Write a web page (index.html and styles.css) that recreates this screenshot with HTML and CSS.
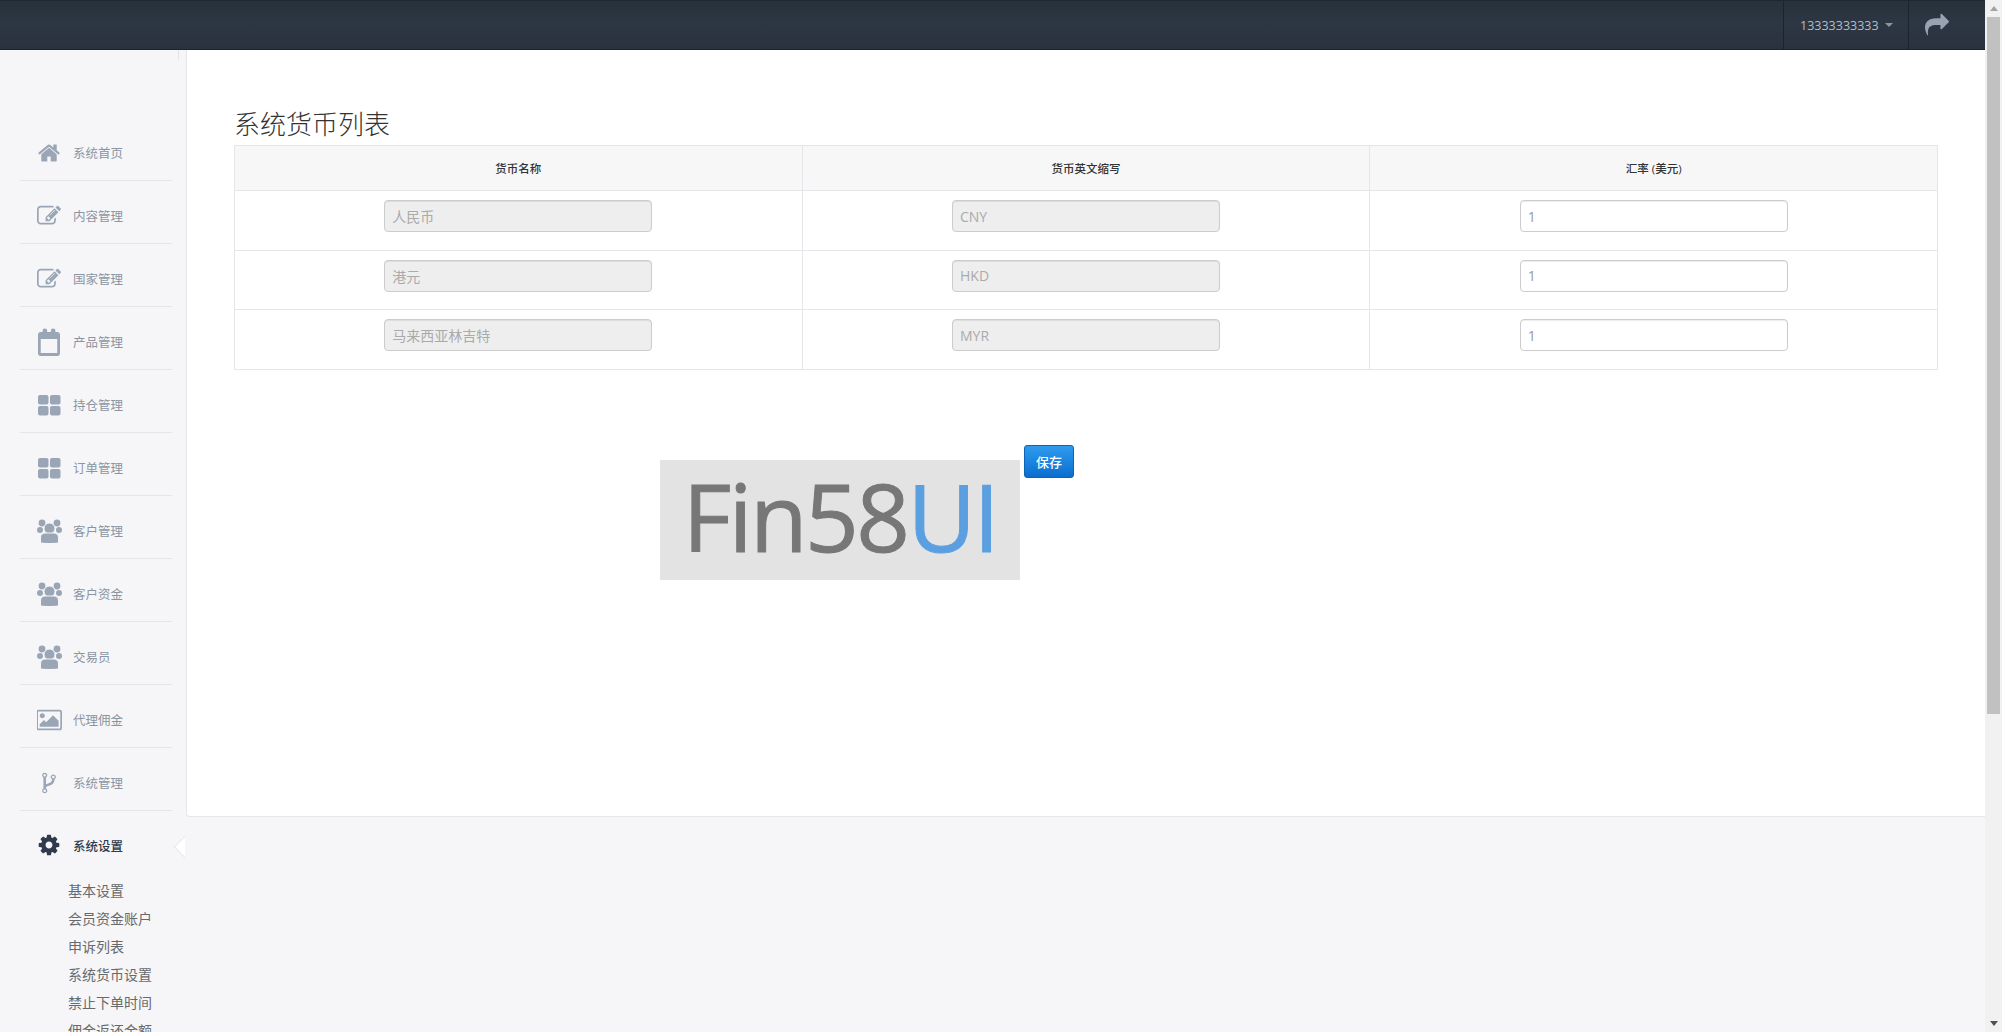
FILE: index.html
```html
<!DOCTYPE html>
<html lang="en">
  <head>
    <meta charset="UTF-8" />
    <title>系统货币列表</title>
    <link rel="stylesheet" href="styles.css">
  </head>
  <body>
    <svg class="sprite" xmlns="http://www.w3.org/2000/svg">
      <symbol id="i-home" viewBox="0 0 1792 1792"><path d="M1472 992v480q0 26-19 45t-45 19h-384v-384h-256v384h-384q-26 0-45-19t-19-45v-480q0-1 .5-3t.5-3l575-474 575 474q1 2 1 6zm223-69l-62 74q-8 9-21 11h-3q-13 0-21-7l-692-577-692 577q-12 8-24 7-13-2-21-11l-62-74q-8-10-7-23.5t11-20.5l719-599q32-26 76-26t76 26l244 204v-195q0-14 9-23t23-9h192q14 0 23 9t9 23v408l219 182q10 8 11 21.5t-7 23.5z"/></symbol>
      <symbol id="i-edit" viewBox="0 0 1792 1792"><path d="M888 1184l116-116-152-152-116 116v56h96v96h56zm440-720q-16-16-33 1l-350 350q-17 17-1 33t33-1l350-350q17-17 1-33zm80 594v190q0 119-84.5 203.5t-203.5 84.5h-832q-119 0-203.5-84.5t-84.5-203.5v-832q0-119 84.5-203.5t203.5-84.5h832q63 0 117 25 15 7 18 23 3 17-9 29l-49 49q-14 14-32 8-23-6-45-6h-832q-66 0-113 47t-47 113v832q0 66 47 113t113 47h832q66 0 113-47t47-113v-126q0-13 9-22l64-64q15-15 35-7t20 29zm-96-738l288 288-672 672h-288v-288zm444 132l-92 92-288-288 92-92q28-28 68-28t68 28l152 152q28 28 28 68t-28 68z"/></symbol>
      <symbol id="i-calendar" viewBox="0 0 24 28" preserveAspectRatio="none"><path fill-rule="evenodd" d="M3 4h2v-1.500q0-2 2.500-2t2.500 2v1.500h4v-1.500q0-2 2.500-2t2.500 2v1.500h2q3 0 3 3v18q0 3-3 3h-18q-3 0-3-3v-18q0-3 3-3zm0 7v14h18v-14z"/></symbol>
      <symbol id="i-grid" viewBox="0 0 24 24"><rect x="1" y="2" width="10.500" height="9.500" rx="2"/><rect x="13" y="2" width="10.500" height="9.500" rx="2"/><rect x="1" y="13" width="10.500" height="9.500" rx="2"/><rect x="13" y="13" width="10.500" height="9.500" rx="2"/></symbol>
      <symbol id="i-group" viewBox="0 0 26 24">
        <circle cx="5" cy="4" r="3.400"/><circle cx="20" cy="4" r="3.400"/>
        <circle cx="3" cy="11" r="3"/><circle cx="22" cy="11" r="3"/>
        <circle class="halo" cx="12.500" cy="9.500" r="5.500"/>
        <path class="halo" d="M3.500 24v-5q0-5 5-5h8q5 0 5 5v5q-4 .500-9 .500t-9-.500z"/>
      </symbol>
      <symbol id="i-picture" viewBox="0 0 1920 1792"><path d="M576 576q0 80-56 136t-136 56-136-56-56-136 56-136 136-56 136 56 56 136zm1024 384v448h-1408v-192l320-320 160 160 512-512zm96-704h-1600q-13 0-22.500 9.500t-9.500 22.500v1216q0 13 9.500 22.500t22.500 9.500h1600q13 0 22.500-9.500t9.500-22.500v-1216q0-13-9.500-22.500t-22.500-9.500zm160 32v1216q0 66-47 113t-113 47h-1600q-66 0-113-47t-47-113v-1216q0-66 47-113t113-47h1600q66 0 113 47t47 113z"/></symbol>
      <symbol id="i-fork" viewBox="0 0 1792 1792"><path d="M672 1472q0-40-28-68t-68-28-68 28-28 68 28 68 68 28 68-28 28-68zm0-1152q0-40-28-68t-68-28-68 28-28 68 28 68 68 28 68-28 28-68zm640 128q0-40-28-68t-68-28-68 28-28 68 28 68 68 28 68-28 28-68zm96 0q0 52-26 96.500t-70 69.500q-2 287-226 414-67 38-203 81-128 40-169.500 71t-41.500 100v26q44 25 70 69.500t26 96.500q0 80-56 136t-136 56-136-56-56-136q0-52 26-96.500t70-69.500v-820q-44-25-70-69.500t-26-96.500q0-80 56-136t136-56 136 56 56 136q0 52-26 96.500t-70 69.500v497q54-26 154-57 55-17 87.500-29.500t70.500-31 59-39.500 40.500-51 28-69.500 8.500-91.500q-44-25-70-69.500t-26-96.500q0-80 56-136t136-56 136 56 56 136z"/></symbol>
      <symbol id="i-cog" viewBox="0 0 1792 1792"><path d="M1152 896q0-106-75-181t-181-75-181 75-75 181 75 181 181 75 181-75 75-181zm512-109v222q0 12-8 23t-20 13l-185 28q-19 54-39 91 35 50 107 138 10 12 10 25t-9 23q-27 37-99 108t-94 71q-12 0-26-9l-138-108q-44 23-91 38-16 136-29 186-7 28-36 28h-222q-14 0-24.500-8.500t-11.500-21.500l-28-184q-49-16-90-37l-141 107q-10 9-25 9-14 0-25-11-126-114-165-168-7-10-7-23 0-12 8-23 15-21 51-66.500t54-70.500q-27-50-41-99l-183-27q-13-2-21-12.500t-8-23.500v-222q0-12 8-23t19-13l186-28q14-46 39-92-40-57-107-138-10-12-10-24 0-10 9-23 26-36 98.500-107.500t94.500-71.500q13 0 26 10l138 107q44-23 91-38 16-136 29-186 7-28 36-28h222q14 0 24.500 8.500t11.500 21.500l28 184q49 16 90 37l142-107q9-9 24-9 13 0 25 10 129 119 165 170 7 8 7 22 0 12-8 23-15 21-51 66.500t-54 70.500q26 50 41 98l183 28q13 2 21 12.500t8 23.500z"/></symbol>
      <symbol id="i-share" viewBox="0 0 1792 1792"><path d="M1792 640q0 26-19 45l-512 512q-19 19-45 19t-45-19-19-45v-256h-224q-98 0-175.500 6t-154 21.500-133 42.500-105.500 69.500-79 101-47.500 138.500-17.500 181.500q0 55 5 123 0 6 2.500 23.500t2.500 26.500q0 15-8.500 25t-23.500 10q-16 0-28-17-7-9-13-22t-13.500-30-10.500-24q-127-285-127-451 0-199 53-333 162-403 875-403h224v-256q0-26 19-45t45-19 45 19l512 512q19 19 19 45z"/></symbol>
    </svg>

    <div class="window">
      <div class="page">
        <!-- Top bar -->
        <header class="topbar">
          <a class="user-menu">13333333333<span class="caret"></span></a>
          <a class="logout"><svg class="logout-icon"><use href="#i-share"/></svg></a>
        </header>

        <div class="wrapper">
          <!-- Sidebar -->
          <nav class="sidebar">
            <a class="nav-item"><svg class="nav-icon"><use href="#i-home"/></svg>系统首页</a>
            <a class="nav-item"><svg class="nav-icon"><use href="#i-edit"/></svg>内容管理</a>
            <a class="nav-item"><svg class="nav-icon"><use href="#i-edit"/></svg>国家管理</a>
            <a class="nav-item"><svg class="nav-icon calendar"><use href="#i-calendar"/></svg>产品管理</a>
            <a class="nav-item"><svg class="nav-icon"><use href="#i-grid"/></svg>持仓管理</a>
            <a class="nav-item"><svg class="nav-icon"><use href="#i-grid"/></svg>订单管理</a>
            <a class="nav-item"><svg class="nav-icon wide"><use href="#i-group"/></svg>客户管理</a>
            <a class="nav-item"><svg class="nav-icon wide"><use href="#i-group"/></svg>客户资金</a>
            <a class="nav-item"><svg class="nav-icon wide"><use href="#i-group"/></svg>交易员</a>
            <a class="nav-item"><svg class="nav-icon wide"><use href="#i-picture"/></svg>代理佣金</a>
            <a class="nav-item"><svg class="nav-icon"><use href="#i-fork"/></svg>系统管理</a>
            <a class="nav-item active"><svg class="nav-icon"><use href="#i-cog"/></svg>系统设置<span class="arrow"></span></a>
            <div class="submenu">
              <a>基本设置</a>
              <a>会员资金账户</a>
              <a>申诉列表</a>
              <a>系统货币设置</a>
              <a>禁止下单时间</a>
              <a>佣金返还金额</a>
            </div>
          </nav>

          <!-- Content -->
          <main class="content">
            <h1 class="page-title">系统货币列表</h1>
            <table class="currency-table">
              <thead>
                <tr>
                  <th>货币名称</th>
                  <th>货币英文缩写</th>
                  <th>汇率 (美元)</th>
                </tr>
              </thead>
              <tbody>
                <tr>
                  <td><input class="field" type="text" value="人民币" disabled></td>
                  <td><input class="field" type="text" value="CNY" disabled></td>
                  <td><input class="field" type="text" value="1"></td>
                </tr>
                <tr>
                  <td><input class="field" type="text" value="港元" disabled></td>
                  <td><input class="field" type="text" value="HKD" disabled></td>
                  <td><input class="field" type="text" value="1"></td>
                </tr>
                <tr>
                  <td><input class="field" type="text" value="马来西亚林吉特" disabled></td>
                  <td><input class="field" type="text" value="MYR" disabled></td>
                  <td><input class="field" type="text" value="1"></td>
                </tr>
              </tbody>
            </table>
            <div class="actions">
              <div class="logo">Fin58<span class="logo-ui">UI</span></div>
              <button class="save-button">保存</button>
            </div>
          </main>
        </div>
      </div>

      <!-- Scrollbar -->
      <div class="scrollbar">
        <span class="scroll-up"></span>
        <div class="scroll-thumb"></div>
        <span class="scroll-down"></span>
      </div>
    </div>
  </body>
</html>
```

FILE: styles.css
```css
body {
  margin: 0;
  height: 1032px;
  overflow: hidden;
  font-family: "Open Sans", "Noto Sans CJK SC", sans-serif;
  font-size: 13px;
  color: #676a6c;
  background-color: #f6f6f8;
}

.sprite {
  display: none;
}

.window {
  display: flex;
  height: 1032px;
}

.page {
  flex: 1;
  min-width: 0;
  display: flex;
  flex-direction: column;
}

/* Top bar */
.topbar {
  height: 50px;
  box-sizing: border-box;
  display: flex;
  justify-content: flex-end;
  background: linear-gradient(#27313c, #2d3743 45%, #29323e);
  border-top: 1px solid #1f2832;
  border-bottom: 1px solid #1b232c;
}

.user-menu {
  width: 125px;
  box-sizing: border-box;
  display: flex;
  align-items: center;
  padding-left: 16px;
  color: #b4bcc6;
  font-size: 12.5px;
  border-left: 1px solid #1b232c;
}

.caret {
  margin-left: 6px;
  border-top: 4px solid #8b95a1;
  border-left: 4px solid transparent;
  border-right: 4px solid transparent;
}

.logout {
  width: 77px;
  box-sizing: border-box;
  display: flex;
  align-items: center;
  padding-left: 16px;
  border-left: 1px solid #1b232c;
}

.logout-icon {
  width: 24px;
  height: 24px;
  fill: #97a3b2;
}

/* Sidebar */
.wrapper {
  flex: 1;
  min-height: 0;
  display: flex;
}

.sidebar {
  position: relative;
  width: 186px;
  flex-shrink: 0;
  box-sizing: border-box;
  padding-top: 68px;
  overflow: hidden;
  background-color: #f6f6f8;
}

.sidebar::before {
  content: "";
  position: absolute;
  top: 0;
  left: 178px;
  width: 1px;
  height: 10px;
  background-color: #e3e5e9;
}

.nav-item {
  position: relative;
  height: 63px;
  box-sizing: border-box;
  display: flex;
  align-items: center;
  margin: 0 14px 0 20px;
  padding: 7px 0 0 17px;
  color: #8b94a1;
  font-size: 12.5px;
  border-bottom: 1px solid #e3e5e9;
}

.nav-icon {
  width: 24px;
  height: 24px;
  margin-right: 12px;
  fill: #9aa6b5;
  stroke: none;
  overflow: visible;
}

.nav-icon.wide {
  width: 26px;
  margin-right: 10px;
}

.nav-icon.calendar {
  width: 22px;
  height: 28px;
  margin-left: 1px;
  margin-right: 13px;
}

.halo {
  stroke: #f6f6f8;
  stroke-width: 1;
}

.nav-item.active {
  padding-top: 5px;
  color: #2f3b4c;
  font-weight: 500;
  border-bottom: none;
}

.nav-item.active .nav-icon {
  fill: #2f3b4c;
}

/* Little pointer next to the open menu */
.arrow {
  position: absolute;
  top: 25px;
  right: -13px;
  width: 11px;
  height: 22px;
  overflow: hidden;
}

.arrow::before {
  content: "";
  position: absolute;
  top: 3px;
  left: 3px;
  width: 15px;
  height: 15px;
  background-color: #fff;
  border-left: 1px solid #e3e5e9;
  border-bottom: 1px solid #e3e5e9;
  transform: rotate(45deg);
}

.submenu {
  padding: 3px 0 0 68px;
}

.submenu a {
  display: block;
  height: 28px;
  line-height: 28px;
  color: #676a6c;
  font-size: 14px;
}

/* Content */
.content {
  flex: 1;
  min-width: 0;
  height: 767px;
  box-sizing: border-box;
  padding: 57px 47px 0 47px;
  background-color: #fff;
  border-left: 1px solid #e5e6e9;
  border-bottom: 1px solid #e5e6e9;
  border-bottom-left-radius: 4px;
}

.page-title {
  margin: 0;
  height: 38px;
  line-height: 35px;
  color: #333;
  font-size: 26px;
  font-weight: 300;
}

.currency-table {
  width: 100%;
  table-layout: fixed;
  border-collapse: collapse;
}

.currency-table th,
.currency-table td {
  box-sizing: border-box;
  border: 1px solid #e5e6e9;
  text-align: center;
}

.currency-table th {
  height: 45px;
  padding: 0;
  color: #333;
  font-size: 11.5px;
  font-weight: 500;
  background-color: #f7f7f8;
}

.currency-table td {
  height: 59.6px;
  padding: 9px 0 0;
  vertical-align: top;
}

.field {
  display: inline-block;
  width: 268px;
  height: 32px;
  box-sizing: border-box;
  padding: 0 7px;
  color: #999;
  font-family: inherit;
  font-size: 14px;
  background-color: #fff;
  border: 1px solid #ccc;
  border-radius: 4px;
  box-shadow: inset 0 1px 1px rgba(0, 0, 0, 0.075);
}

.field:disabled {
  color: #aaa;
  background-color: #eeeeef;
}

.actions {
  display: flex;
  align-items: flex-start;
  margin-top: 75px;
  padding-left: 426px;
}

.logo {
  width: 360px;
  height: 120px;
  margin-top: 15px;
  margin-right: 4px;
  text-align: center;
  color: #777;
  font-size: 94px;
  line-height: 112px;
  letter-spacing: -2.5px;
  -webkit-text-stroke: 1px;
  background-color: #e3e3e3;
}

.logo-ui {
  color: #5b9fe0;
}

.save-button {
  width: 50px;
  height: 33px;
  padding: 0;
  color: #fff;
  font-family: inherit;
  font-size: 13px;
  font-weight: 500;
  background: linear-gradient(#2f9bee, #0a6ecf);
  border: 1px solid #0d63b5;
  border-radius: 3px;
}

/* Scrollbar */
.scrollbar {
  width: 17px;
  flex-shrink: 0;
  display: flex;
  flex-direction: column;
  align-items: center;
  background-color: #f1f1f1;
}

.scroll-up {
  flex-shrink: 0;
  margin-top: 6px;
  margin-bottom: 6px;
  border-bottom: 5px solid #a3a3a3;
  border-left: 4px solid transparent;
  border-right: 4px solid transparent;
}

.scroll-thumb {
  width: 13px;
  height: 697px;
  background-color: #c1c1c1;
}

.scroll-down {
  margin-top: auto;
  margin-bottom: 6px;
  border-top: 5px solid #505050;
  border-left: 4px solid transparent;
  border-right: 4px solid transparent;
}
```
